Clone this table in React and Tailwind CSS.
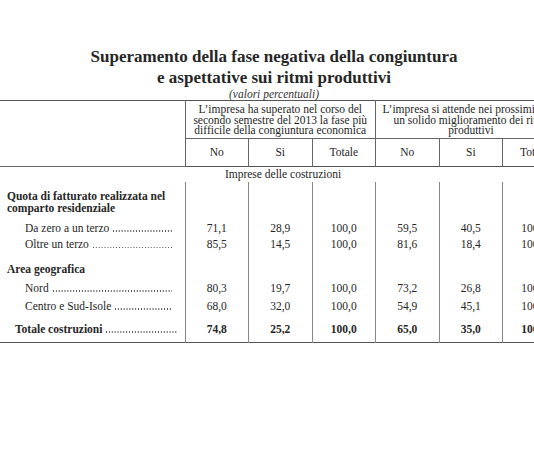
const righe = [
  { tipo: "titolo", testo: ["Quota di fatturato realizzata nel", "comparto residenziale"], h: "h-[38px]", pt: "pt-[8px]" },
  { tipo: "voce", testo: "Da zero a un terzo", h: "h-[17px]", valori: ["71,1", "28,9", "100,0", "59,5", "40,5", "100,0"] },
  { tipo: "voce", testo: "Oltre un terzo", h: "h-[16px]", valori: ["85,5", "14,5", "100,0", "81,6", "18,4", "100,0"] },
  { tipo: "titolo", testo: ["Area geografica"], h: "h-[27px]", pt: "pt-[10px]" },
  { tipo: "voce", testo: "Nord", h: "h-[17px]", valori: ["80,3", "19,7", "100,0", "73,2", "26,8", "100,0"] },
  { tipo: "voce", testo: "Centro e Sud-Isole", h: "h-[19px]", valori: ["68,0", "32,0", "100,0", "54,9", "45,1", "100,0"] },
  { tipo: "totale", testo: "Totale costruzioni", h: "h-[27px]", valori: ["74,8", "25,2", "100,0", "65,0", "35,0", "100,0"] },
];

// Puntini di guida tra etichetta e valori
function Etichetta({ testo, grassetto, pl, pr }) {
  return (
    <div className={`flex items-end whitespace-nowrap ${pl} ${pr}`}>
      <span className={grassetto ? "font-bold" : ""}>{testo}</span>
      <span className="flex-1 min-w-0 h-[1.6px] mb-[1.3px] ml-[3px] bg-[radial-gradient(circle,#555_50%,transparent_60%)] bg-size-[2.9px_1.6px] bg-repeat-x"></span>
    </div>
  );
}

export default function App() {
  return (
    <div className="w-[534px] h-[462px] overflow-hidden bg-white text-[#262626] [font-family:'Liberation_Serif',serif]">
      {/* Titolo */}
      <div className="w-[548px] pt-[46px] text-center">
        <h1 className="text-[17px] leading-[21px] font-bold">
          Superamento della fase negativa della congiuntura
          <br />
          e aspettative sui ritmi produttivi
        </h1>
        <p className="text-[11.5px] leading-[12px] italic text-[#333]">(valori percentuali)</p>
      </div>

      {/* Tabella */}
      <table className="w-[566px] table-fixed border-collapse text-[11.5px] leading-[10.5px]">
        <colgroup>
          <col className="w-[185px]" />
          <col className="w-[63.5px]" />
          <col className="w-[63.5px]" />
          <col className="w-[63.5px]" />
          <col className="w-[63.5px]" />
          <col className="w-[63.5px]" />
          <col className="w-[63.5px]" />
        </colgroup>
        <thead>
          <tr className="h-[38px] border-t border-[#555]">
            <th rowSpan={2} className="border-r border-b border-[#666]"></th>
            <th colSpan={3} className="font-normal text-center align-top pt-[3px] border-r border-b border-[#666] whitespace-nowrap">
              L’impresa ha superato nel corso del
              <br />
              secondo semestre del 2013 la fase più
              <br />
              difficile della congiuntura economica
            </th>
            <th colSpan={3} className="font-normal text-center align-top pt-[3px] border-b border-[#666] whitespace-nowrap">
              L’impresa si attende nei prossimi mesi
              <br />
              un solido miglioramento dei ritmi
              <br />
              produttivi
            </th>
          </tr>
          <tr className="h-[28px] border-b border-[#555]">
            {["No", "Si", "Totale", "No", "Si", "Totale"].map((t, i) => (
              <th key={i} className="font-normal text-center border-r border-[#666] whitespace-nowrap">
                {t}
              </th>
            ))}
          </tr>
        </thead>
        <tbody>
          <tr className="h-[15px]">
            <td colSpan={7} className="text-center align-middle">Imprese delle costruzioni</td>
          </tr>
          {righe.map((r, i) => {
            const ultima = i === righe.length - 1;
            const bordo = ultima ? "border-b border-[#555]" : "";
            if (r.tipo === "titolo") {
              return (
                <tr key={i} className={r.h}>
                  <td className={`align-top ${r.pt} pl-[7px] font-bold leading-[12px] border-r border-[#888]`}>
                    {r.testo.map((t) => (
                      <div key={t}>{t}</div>
                    ))}
                  </td>
                  {[0, 1, 2, 3, 4, 5].map((c) => (
                    <td key={c} className="border-r border-[#888]"></td>
                  ))}
                </tr>
              );
            }
            const tot = r.tipo === "totale";
            return (
              <tr key={i} className={`${r.h} ${bordo}`}>
                <td className="align-middle border-r border-[#888]">
                  <Etichetta
                    testo={r.testo}
                    grassetto={tot}
                    pl={tot ? "pl-[15px]" : "pl-[25px]"}
                    pr={tot ? "pr-[7px]" : "pr-[13px]"}
                  />
                </td>
                {r.valori.map((v, c) => (
                  <td
                    key={c}
                    className={`text-center align-middle whitespace-nowrap border-r border-[#888] ${tot ? "font-bold" : ""}`}
                  >
                    {v}
                  </td>
                ))}
              </tr>
            );
          })}
        </tbody>
      </table>
    </div>
  );
}
